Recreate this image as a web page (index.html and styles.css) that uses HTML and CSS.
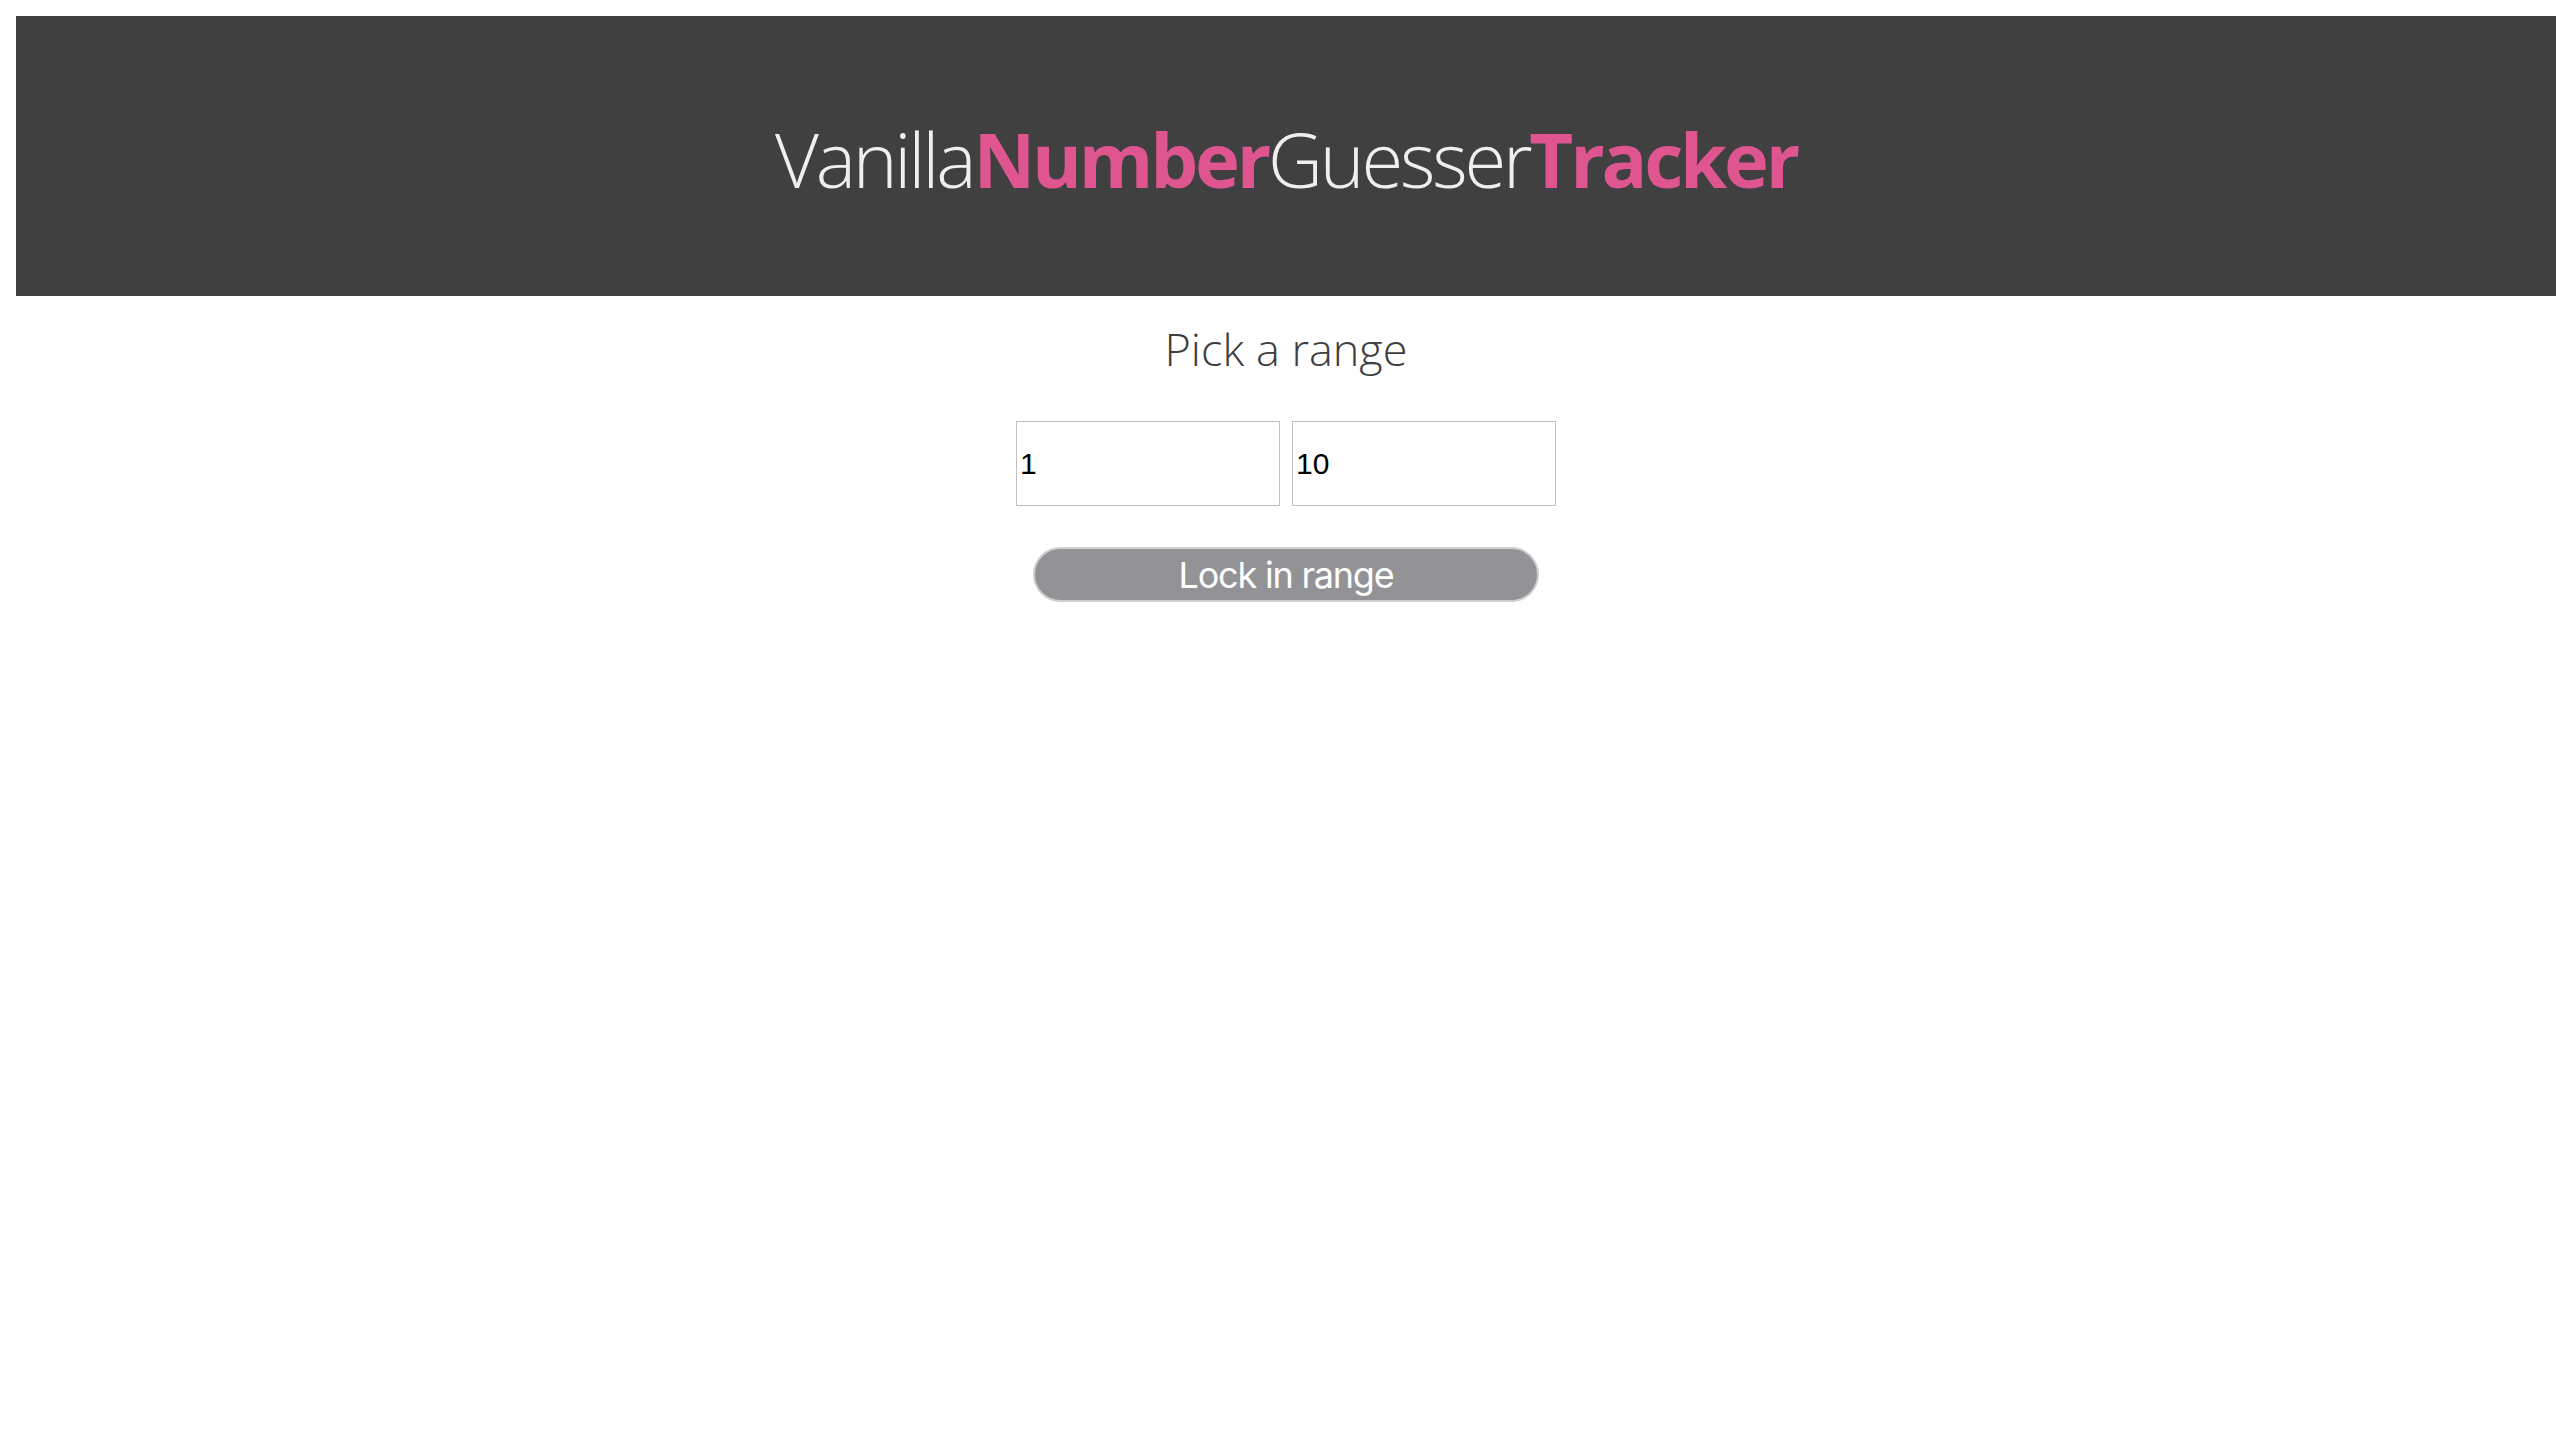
FILE: index.html
```html
<!DOCTYPE html>
<html lang="en">
<head>
<meta charset="utf-8">
<title>Vanilla Number Guesser Tracker</title>
<link rel="stylesheet" href="styles.css">
</head>
<body>
<div class="page">
  <header class="site-header">
    <h1 class="title"><span class="light">Vanilla</span><span class="bold">Number</span><span class="light">Guesser</span><span class="bold">Tracker</span></h1>
  </header>
  <main class="content">
    <h2 class="subtitle">Pick a range</h2>
    <div class="range-row">
      <input class="range-input" type="text" value="1">
      <input class="range-input" type="text" value="10">
    </div>
    <button class="lock-btn" type="button">Lock in range</button>
  </main>
</div>
</body>
</html>
```
FILE: styles.css
```css
html, body {
  margin: 0;
  padding: 0;
  background: #ffffff;
  overflow: hidden;
}

.page {
  padding: 16px 0 0 16px;
}

.site-header {
  height: 280px;
  background: #404040;
  display: flex;
  align-items: center;
  justify-content: center;
}

.title {
  margin: 4px 0 0;
  font-family: "Open Sans", sans-serif;
  font-size: 76px;
  line-height: normal;
  letter-spacing: -3.2px;
  color: #efefef;
  font-weight: 300;
}

.title .light {
  font-weight: 300;
}

.title .bold {
  font-weight: 700;
  color: #de5590;
}

.content {
  display: flex;
  flex-direction: column;
  align-items: center;
}

.subtitle {
  margin: 26px 0 0;
  font-family: "Open Sans", sans-serif;
  font-weight: 300;
  font-size: 45px;
  line-height: 54px;
  color: #3e3e3e;
}

.range-row {
  display: flex;
  gap: 12px;
  margin-top: 45px;
}

.range-input {
  box-sizing: border-box;
  width: 264px;
  height: 85px;
  border: 1px solid #c0c0c0;
  padding: 0 3px;
  margin: 0;
  font-family: "Liberation Sans", Arial, sans-serif;
  font-size: 30px;
  color: #000;
  background: #fff;
  outline: none;
}

.lock-btn {
  box-sizing: border-box;
  margin-top: 41px;
  width: 506px;
  height: 55px;
  border: 2px solid #cfcfcf;
  border-radius: 28px;
  background: #939397;
  color: #ffffff;
  font-family: "Inter", sans-serif;
  font-size: 36px;
  letter-spacing: -1.2px;
  padding: 0;
  line-height: 1;
}
```
